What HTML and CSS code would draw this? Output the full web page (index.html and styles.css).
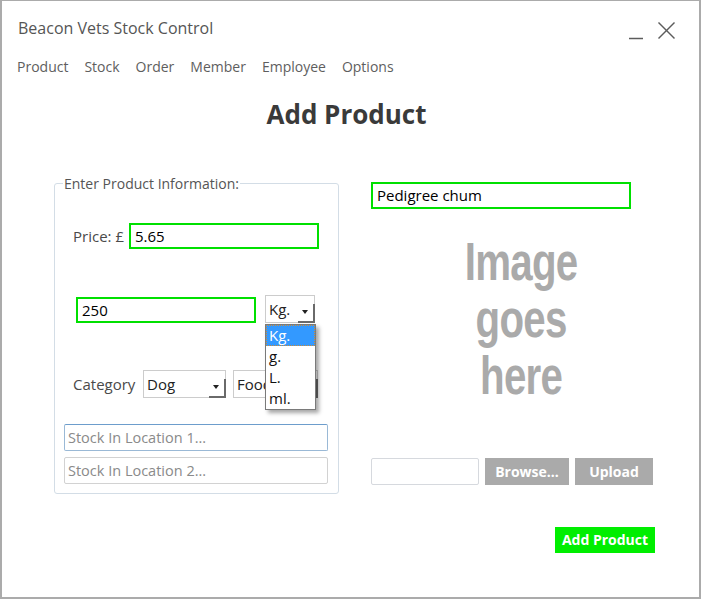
FILE: index.html
```html
<!DOCTYPE html>
<html lang="en">
<head>
<meta charset="utf-8">
<title>Beacon Vets Stock Control</title>
<link rel="stylesheet" href="styles.css">
</head>
<body>
<div class="window">
  <header class="titlebar">
    <span class="title">Beacon Vets Stock Control</span>
    <svg class="controls" width="48" height="20" viewBox="0 0 48 20" aria-hidden="true">
      <line x1="1" y1="17.5" x2="15" y2="17.5" stroke="#5c5c5c" stroke-width="1.5"/>
      <line x1="30.5" y1="1.5" x2="46.5" y2="17.5" stroke="#5c5c5c" stroke-width="1.5"/>
      <line x1="46.5" y1="1.5" x2="30.5" y2="17.5" stroke="#5c5c5c" stroke-width="1.5"/>
    </svg>
  </header>
  <nav class="menu">
    <span>Product</span><span>Stock</span><span>Order</span><span>Member</span><span>Employee</span><span>Options</span>
  </nav>
  <h1 class="heading">Add Product</h1>
  <main class="content">
    <div class="group">
      <span class="legend">Enter Product Information:</span>
      <div class="row row-price">
        <span class="label label-price">Price: £</span>
        <div class="field field-green field-price">5.65</div>
      </div>
      <div class="row row-qty">
        <div class="field field-green field-qty">250</div>
        <div class="combo combo-unit">
          <span class="combo-text">Kg.</span>
          <span class="combo-btn"><span class="arrow"></span></span>
          <ul class="dropdown">
            <li class="selected">Kg.</li>
            <li>g.</li>
            <li>L.</li>
            <li>ml.</li>
          </ul>
        </div>
      </div>
      <div class="row row-cat">
        <span class="label label-cat">Category</span>
        <div class="combo combo-dog">
          <span class="combo-text">Dog</span>
          <span class="combo-btn"><span class="arrow"></span></span>
        </div>
        <div class="combo combo-food">
          <span class="combo-text">Food</span>
          <span class="combo-btn"><span class="arrow"></span></span>
        </div>
      </div>
      <div class="field field-stock field-focus">Stock In Location 1...</div>
      <div class="field field-stock">Stock In Location 2...</div>
    </div>
    <section class="side">
      <div class="field field-green field-name">Pedigree chum</div>
      <div class="image-box"><span class="image-text">Image<br>goes<br>here</span></div>
      <div class="upload-row">
        <div class="file-box"></div>
        <span class="btn btn-gray btn-browse">Browse...</span>
        <span class="btn btn-gray btn-upload">Upload</span>
      </div>
    </section>
  </main>
  <footer class="actions">
    <span class="btn btn-green">Add Product</span>
  </footer>
</div>
</body>
</html>
```
FILE: styles.css
```css
* { box-sizing: border-box; }
html, body { margin: 0; padding: 0; background: #fff; }
body { font-family: "Open Sans", "Noto Sans", "Liberation Sans", sans-serif; color: #444; }

.window {
  width: 701px;
  height: 599px;
  border-style: solid;
  border-color: #ababab;
  border-width: 1px 2px 2px 2px;
  background: #fff;
  overflow: hidden;
}

.titlebar {
  display: flex;
  justify-content: space-between;
  align-items: flex-start;
  height: 46px;
  padding: 16px 23px 0 16px;
}
.title {
  font-size: 16px;
  line-height: 22px;
  color: #555;
}
.controls { margin-top: 4px; }

.menu {
  display: flex;
  gap: 16px;
  padding-left: 15px;
  height: 30px;
  padding-top: 10px;
  font-size: 14px;
  line-height: 20px;
  color: #5e5e5e;
}

.heading {
  margin: 0;
  padding-top: 20px;
  height: 106px;
  text-align: center;
  font-size: 26px;
  line-height: 34px;
  font-weight: 700;
  color: #3a3a3a;
  padding-right: 8px;
}

.content {
  display: flex;
  align-items: flex-start;
  padding-left: 52px;
  height: 311px;
}

.group {
  position: relative;
  width: 285px;
  height: 311px;
  border: 1px solid #d3dde6;
  border-radius: 3px;
  padding: 0 9px;
}
.legend {
  position: absolute;
  top: -10px;
  left: 8px;
  padding: 0 1px;
  background: #fff;
  font-size: 14px;
  line-height: 20px;
  color: #555;
}

.row { display: flex; align-items: flex-start; }
.row-price { margin-top: 39px; padding-left: 9px; }
.row-qty { margin-top: 46px; padding-left: 12px; }
.row-cat { margin-top: 47px; padding-left: 9px; }

.label {
  font-size: 15px;
  line-height: 26px;
  color: #4a4a4a;
}
.label-price { width: 56px; }
.label-cat { width: 70px; padding-top: 1px; }

.field {
  background: #fff;
  font-size: 15px;
  color: #000;
  padding-left: 4px;
  white-space: nowrap;
}
.field-green {
  border: 2px solid #00e000;
  height: 26px;
  line-height: 22px;
}
.field-price { width: 190px; }
.field-qty { width: 180px; margin-top: 2px; }

.combo {
  position: relative;
  height: 28px;
  border: 1px solid #cccccc;
  background: #fff;
  font-size: 15px;
  line-height: 26px;
  color: #222;
}
.combo-text { padding-left: 3px; }
.combo-btn {
  position: absolute;
  right: -1px;
  bottom: -1px;
  width: 17px;
  height: 19px;
  border-right: 2px solid #6a6a6a;
  border-bottom: 2px solid #6a6a6a;
}
.arrow {
  position: absolute;
  left: 4px;
  top: 6px;
  width: 0;
  height: 0;
  border-left: 3.5px solid transparent;
  border-right: 3.5px solid transparent;
  border-top: 4px solid #222;
}
.combo-unit { width: 50px; margin-left: 9px; z-index: 2; }
.combo-dog { width: 83px; }
.combo-food { width: 85px; margin-left: 7px; }

.dropdown {
  position: absolute;
  top: 28px;
  left: -1px;
  width: 51px;
  margin: 0;
  padding: 0;
  list-style: none;
  background: #fff;
  border: 1px solid #7a7a7a;
  box-shadow: 3px 3px 4px rgba(0, 0, 0, 0.35);
  font-size: 15px;
  line-height: 21px;
  color: #111;
}
.dropdown li { padding-left: 3px; height: 21px; }
.dropdown li.selected {
  background: #3399ff;
  color: #fff;
  outline: 1px dotted #c98a3a;
  outline-offset: -1px;
}

.field-stock {
  width: 264px;
  height: 27px;
  border: 1px solid #d2d2d2;
  border-radius: 2px;
  line-height: 25px;
  font-size: 14.5px;
  color: #8a8a8a;
  padding-left: 3px;
  margin-top: 6px;
}
.field-stock.field-focus {
  margin-top: 26px;
  border-color: #9ab9d6;
  border-top-color: #6d9dcc;
}

.side {
  width: 300px;
  margin-left: 32px;
  margin-top: -1px;
}
.field-name { width: 260px; height: 27px; line-height: 23px; }

.image-box {
  height: 249px;
  padding-top: 24px;
  text-align: center;
  font-family: "Liberation Sans", "Open Sans", sans-serif;
  font-weight: 700;
  font-size: 53px;
  line-height: 57px;
  color: #aaaaaa;
}
.image-text {
  display: inline-block;
  transform: scaleX(0.76);
  letter-spacing: -1px;
}

.upload-row { display: flex; gap: 6px; }
.file-box {
  width: 108px;
  height: 27px;
  border: 1px solid #d6d9de;
  border-radius: 2px;
}
.btn {
  display: inline-block;
  height: 27px;
  line-height: 27px;
  text-align: center;
  font-size: 14px;
  font-weight: 700;
  color: #fff;
}
.btn-gray { background: #aaaaaa; }
.btn-browse { width: 84px; }
.btn-upload { width: 78px; }

.actions {
  display: flex;
  justify-content: flex-end;
  padding-right: 44px;
  margin-top: 33px;
}
.btn-green {
  background: #00ee00;
  width: 100px;
  height: 26px;
  line-height: 26px;
}
```
